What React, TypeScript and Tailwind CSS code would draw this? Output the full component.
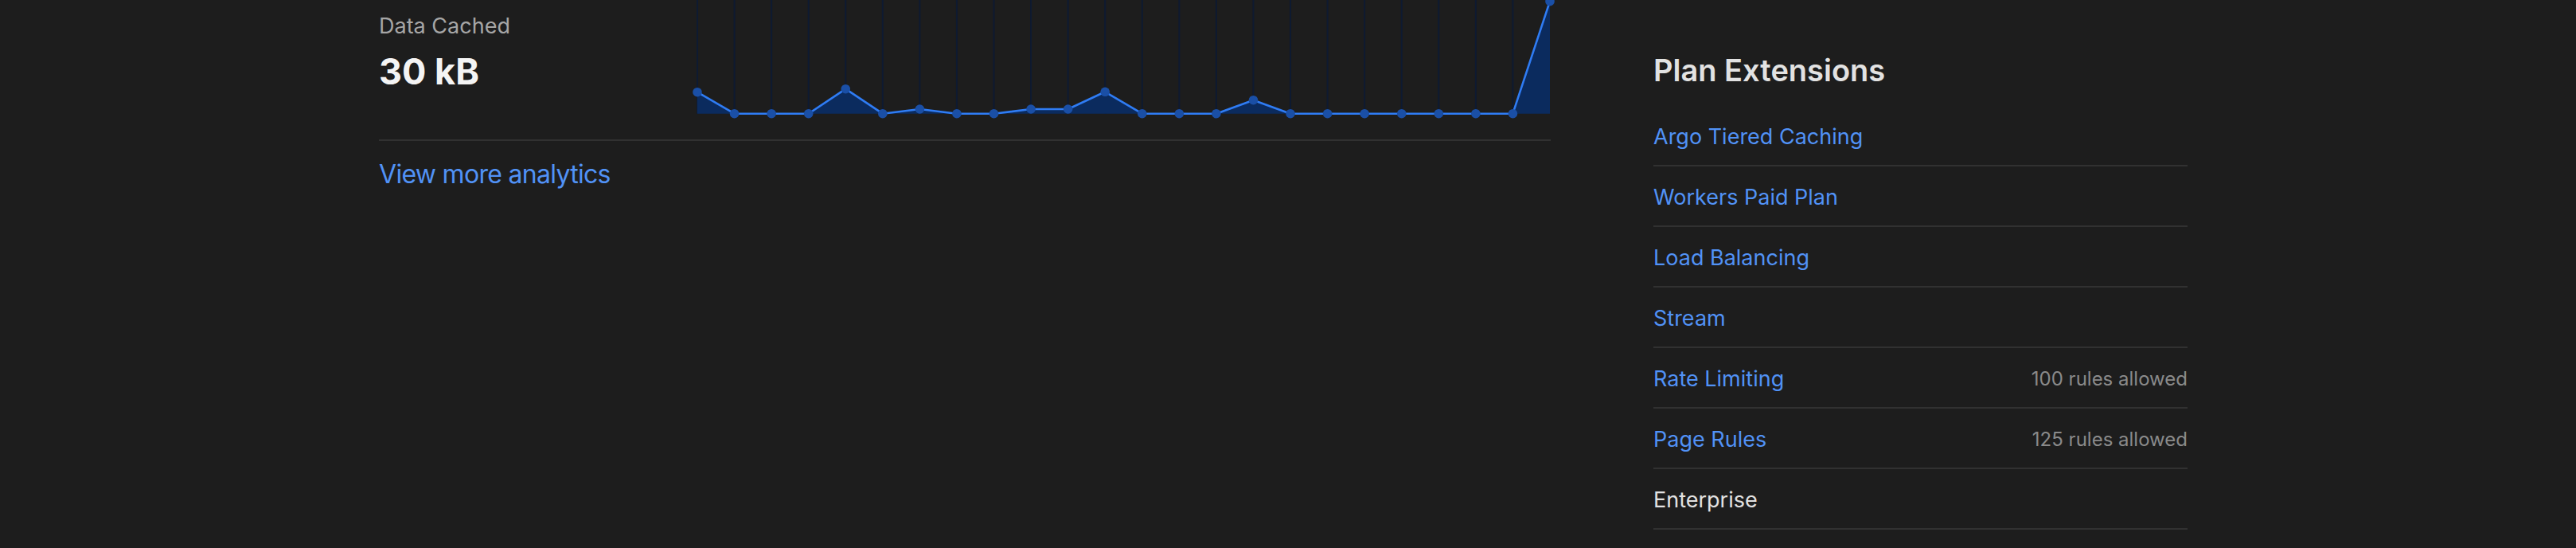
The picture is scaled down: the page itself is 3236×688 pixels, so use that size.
import React from 'react';

const BASE = 142.7;
const STEP = 1071 / 23;
const ys = [
  115.7, BASE, BASE, BASE, 111.7, BASE, 137, BASE, BASE, 137, 137, 115.3,
  BASE, BASE, BASE, 125.7, BASE, BASE, BASE, BASE, BASE, BASE, BASE, 1.7,
];

const extensions = [
  { name: 'Argo Tiered Caching', link: true },
  { name: 'Workers Paid Plan', link: true },
  { name: 'Load Balancing', link: true },
  { name: 'Stream', link: true },
  { name: 'Rate Limiting', link: true, note: '100 rules allowed' },
  { name: 'Page Rules', link: true, note: '125 rules allowed' },
  { name: 'Enterprise', link: false },
];

const CachedChart = () => {
  const pts = ys.map((y, i) => [i * STEP, y] as const);
  const line = pts.map(([x, y]) => `${x.toFixed(1)},${y}`).join(' ');
  const area = `M0,${BASE} L${line.replace(/ /g, ' L')} L${(23 * STEP).toFixed(1)},${BASE} Z`;

  return (
    <svg width="1072" height="144" viewBox="0 0 1072 144" className="block overflow-visible">
      {pts.slice(0, 23).map(([x], i) => (
        <line key={i} x1={x} y1={-20} x2={x} y2={BASE} stroke="#0e1a31" strokeWidth="2" />
      ))}
      <path d={area} fill="#0b2b5e" />
      <polyline points={line} fill="none" stroke="#2f7cf4" strokeWidth="2.6" strokeLinejoin="round" />
      {pts.map(([x, y], i) => (
        <circle key={i} cx={x} cy={y} r="5.8" fill="#1a4fa6" />
      ))}
    </svg>
  );
};

export default function App() {
  return (
    <div className="min-h-[688px] w-full bg-[#1d1d1d] font-['Inter',sans-serif] overflow-hidden">
      <div className="flex pl-[476px]">
        {/* left: analytics card */}
        <div className="w-[1472px] shrink-0">
          <div className="flex h-[177px] border-b-2 border-[#313131]">
            <div className="w-[400px] shrink-0 pt-[15px]">
              <div className="text-[27px] leading-[36px] text-[#a6a6a6]">Data Cached</div>
              <div className="mt-[17px] text-[45px] leading-[44px] font-bold text-[#f4f4f4]">30 kB</div>
            </div>
            <div>
              <CachedChart />
            </div>
          </div>
          <a className="mt-[22px] block text-[32px] leading-[40px] tracking-[-0.7px] text-[#5192f6]" href="#">
            View more analytics
          </a>
        </div>

        {/* right: plan extensions */}
        <div className="ml-[129px] w-[671px] shrink-0 pt-[66px]">
          <h2 className="text-[38px] leading-[44px] font-semibold text-[#e2e2e2]">Plan Extensions</h2>
          <ul className="mt-[23px]">
            {extensions.map((ext) => (
              <li
                key={ext.name}
                className="flex h-[76px] items-center justify-between border-b-2 border-[#313131] pt-[3px]"
              >
                <span className={`text-[27px] leading-[32px] ${ext.link ? 'text-[#5192f6]' : 'text-[#e2e2e2]'}`}>
                  {ext.name}
                </span>
                {ext.note && <span className="text-[24px] leading-[32px] text-[#8a8a8a]">{ext.note}</span>}
              </li>
            ))}
          </ul>
        </div>
      </div>
    </div>
  );
}
